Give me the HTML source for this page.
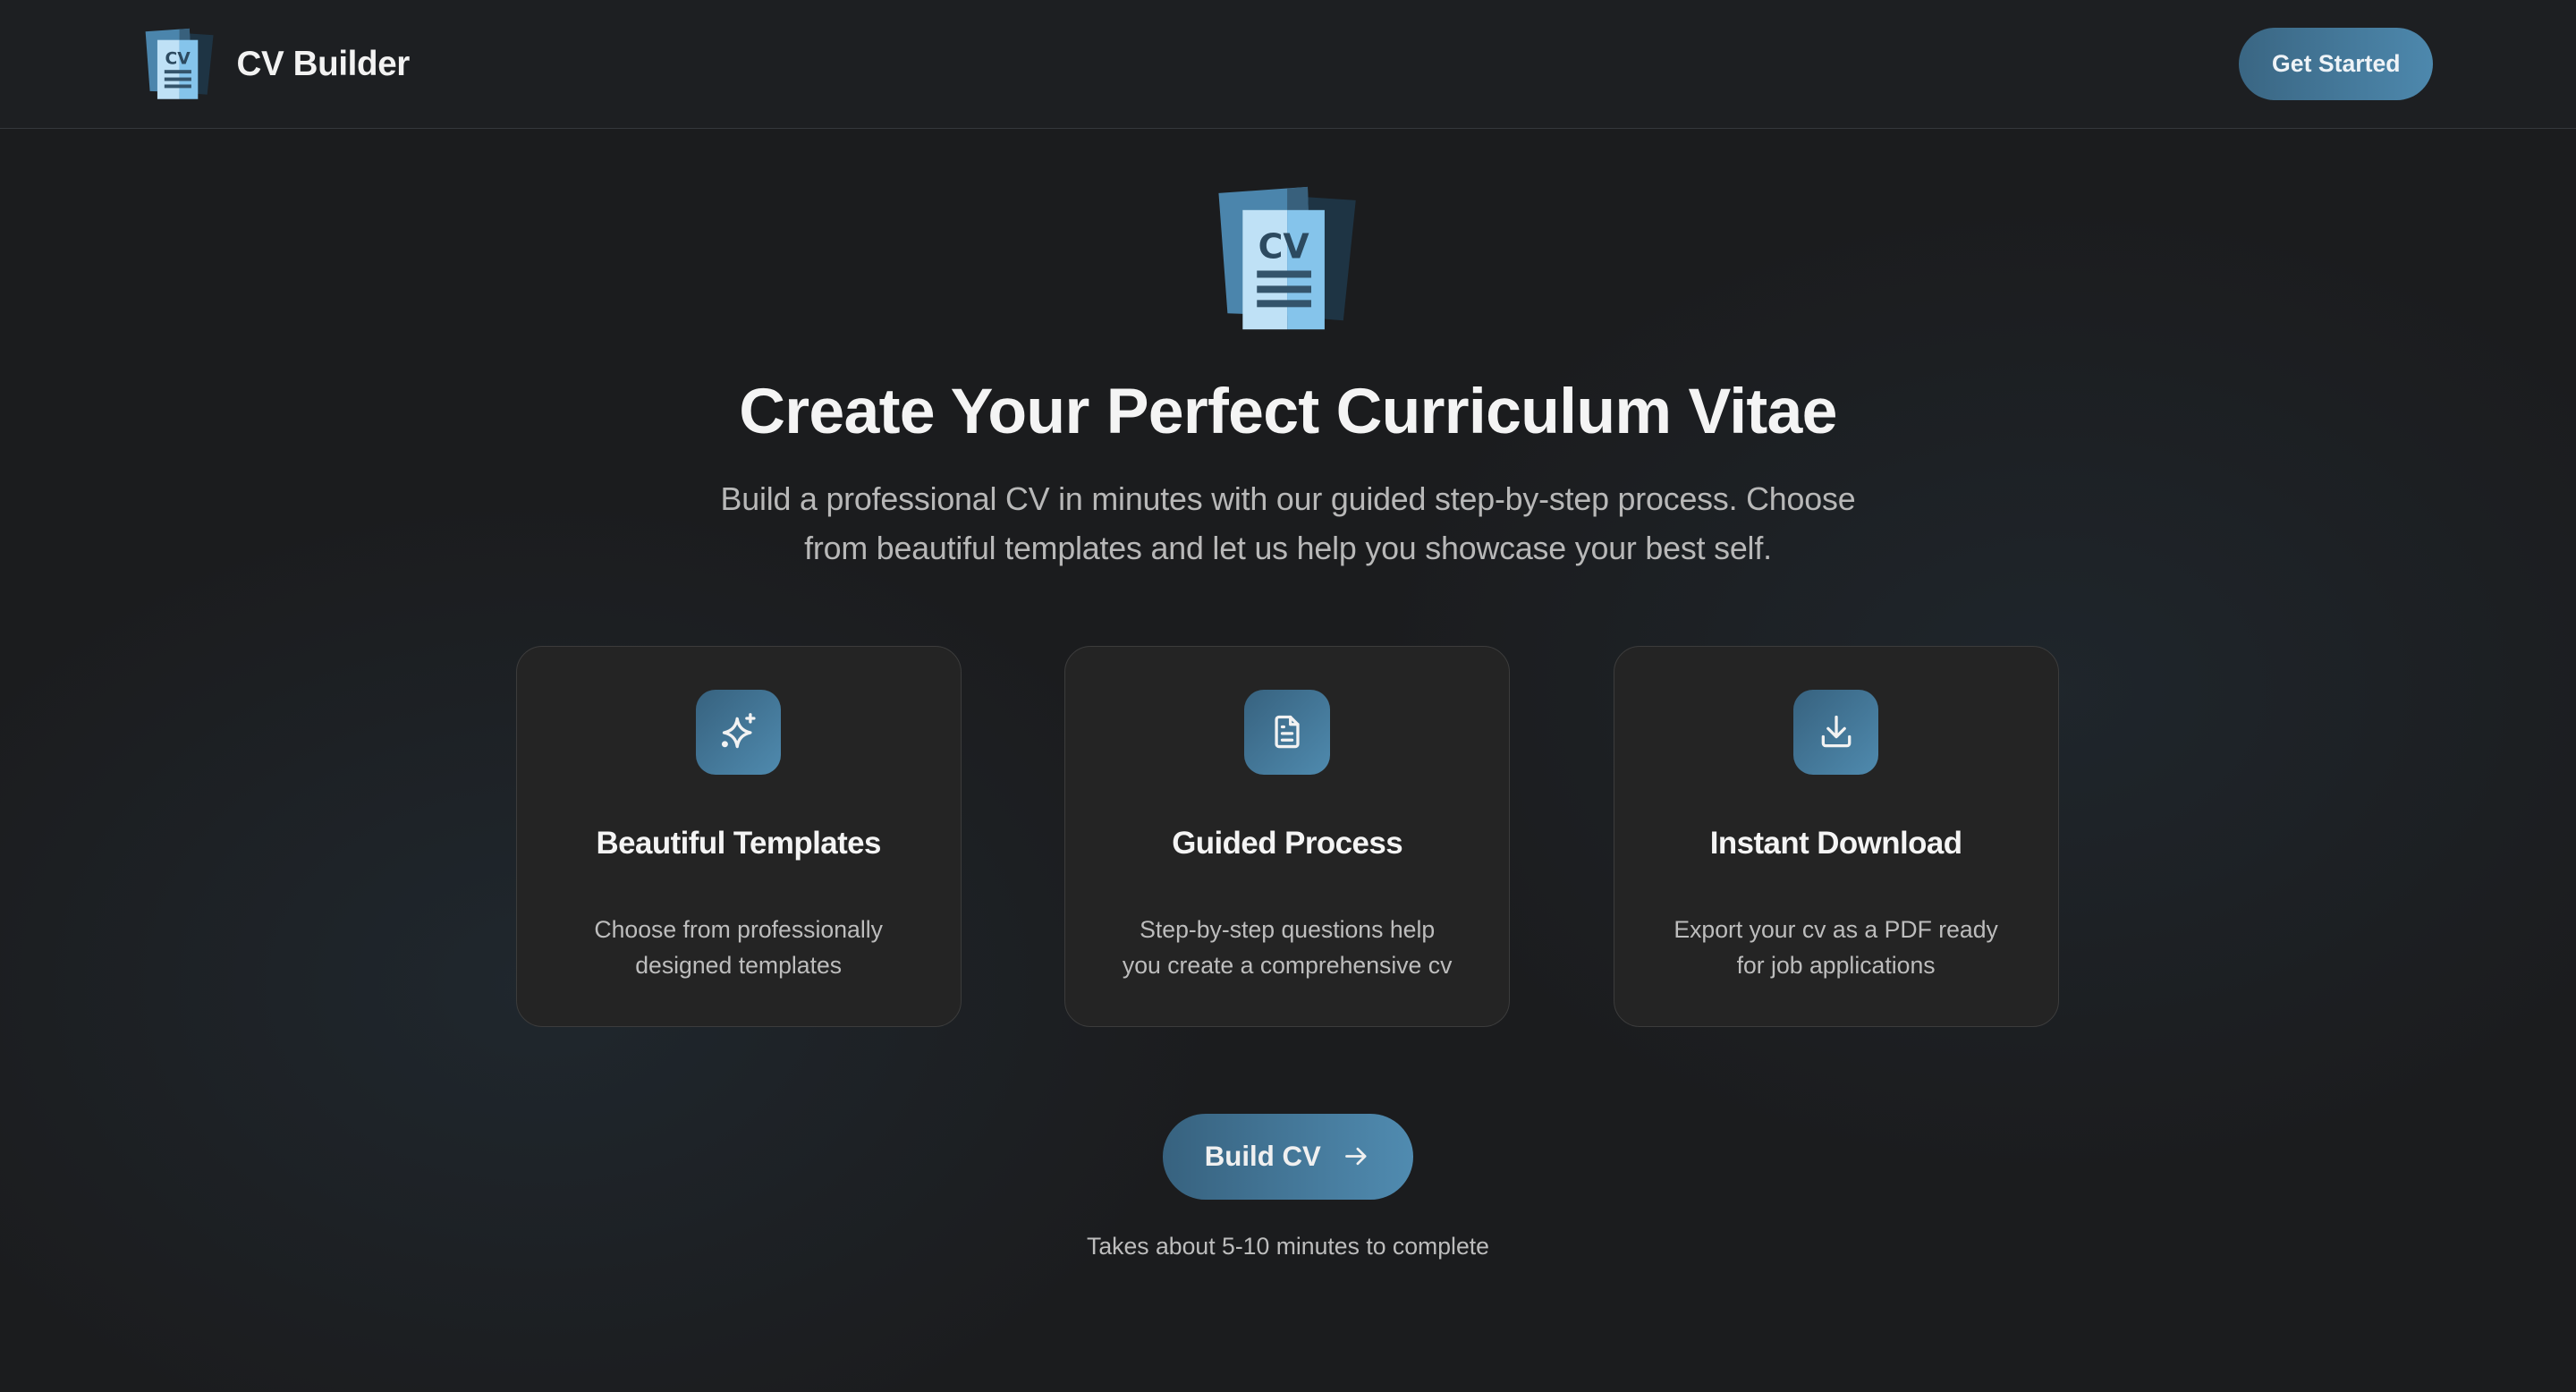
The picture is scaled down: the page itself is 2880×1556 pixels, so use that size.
<!DOCTYPE html>
<html><head><meta charset="utf-8"><style>
html,body{margin:0;padding:0;}
body{width:2880px;height:1556px;overflow:hidden;background:#1b1c1e;font-family:"Liberation Sans",sans-serif;}
#r{zoom:1.83673;width:1568px;height:847px;position:relative;overflow:hidden;
background:radial-gradient(ellipse 420px 300px at 330px 600px,rgba(40,60,75,.35),transparent),radial-gradient(ellipse 420px 300px at 1250px 420px,rgba(40,60,75,.3),transparent),#1b1c1e;}
.a{position:absolute;}
header{position:absolute;left:0;top:0;width:1568px;height:78px;background:#1d1f22;border-bottom:1px solid #35383c;}
.brand{left:144px;top:27px;font-size:21px;font-weight:700;color:#f2f2f2;letter-spacing:-.2px;}
.gs{left:1363px;top:17px;width:118px;height:44px;border-radius:22px;background:linear-gradient(90deg,#3a6683,#4d88ad);color:#eef3f7;font-size:14.5px;font-weight:700;text-align:center;line-height:44px;}
h1{position:absolute;left:0;width:1568px;top:228px;margin:0;text-align:center;font-size:39px;letter-spacing:-.4px;font-weight:700;color:#f4f4f4;}
.p{left:424px;width:720px;top:289px;text-align:center;font-size:19.5px;line-height:30px;color:#b8b8b8;letter-spacing:-.1px;}
.card{position:absolute;top:393px;width:270px;height:231px;border:1px solid #3c3c3c;border-radius:16px;background:#242424;text-align:center;}
.ic{position:absolute;left:109px;top:26px;width:52px;height:52px;border-radius:12px;background:linear-gradient(135deg,#37627f,#4f8aae);}
.ic svg{position:absolute;left:14px;top:14px;}
.t{position:absolute;left:0;right:0;top:109px;font-size:19px;letter-spacing:-.3px;font-weight:700;color:#f4f4f4;}
.d{position:absolute;left:34px;right:34px;top:161px;font-size:14.5px;line-height:22px;color:#bdbdbd;}
.btn{left:708px;top:678px;width:152px;height:52px;border-radius:26px;background:linear-gradient(90deg,#37627f,#508bb0);color:#f0f0f0;font-size:17px;font-weight:700;line-height:52px;text-align:center;}
.fn{left:0;width:1568px;top:750px;text-align:center;font-size:14.5px;color:#bdbdbd;}
</style></head><body><div id="r">
<header>
<svg class="a" style="left:82px;top:12px" width="54" height="51" viewBox="0 0 200 190">
<polygon points="100,30 177,35 163,170 100,165" fill="#1e3444"/>
<polygon points="23,27 123,20 127,165 33,162" fill="#4b85ac"/>
<polygon points="100,22 123,20 127,165 100,164" fill="#38607c"/>
<rect x="50" y="46" width="50" height="134" fill="#bfe1f6"/><rect x="100" y="46" width="42" height="134" fill="#85c4eb"/>
<text x="96" y="100" text-anchor="middle" font-family="DejaVu Sans" font-weight="700" font-size="38" fill="#2c4a60">CV</text>
<rect x="66" y="114" width="61" height="8" fill="#34546b"/><rect x="66" y="131" width="61" height="8" fill="#34546b"/><rect x="66" y="147" width="61" height="8" fill="#34546b"/>
</svg>
<div class="a brand">CV Builder</div>
<div class="a gs">Get Started</div>
</header>
<svg class="a" style="left:729px;top:103px" width="109" height="103" viewBox="0 0 200 190">
<polygon points="100,30 177,35 163,170 100,165" fill="#1e3444"/>
<polygon points="23,27 123,20 127,165 33,162" fill="#4b85ac"/>
<polygon points="100,22 123,20 127,165 100,164" fill="#38607c"/>
<rect x="50" y="46" width="50" height="134" fill="#bfe1f6"/><rect x="100" y="46" width="42" height="134" fill="#85c4eb"/>
<text x="96" y="100" text-anchor="middle" font-family="DejaVu Sans" font-weight="700" font-size="38" fill="#2c4a60">CV</text>
<rect x="66" y="114" width="61" height="8" fill="#34546b"/><rect x="66" y="131" width="61" height="8" fill="#34546b"/><rect x="66" y="147" width="61" height="8" fill="#34546b"/>
</svg>
<h1>Create Your Perfect Curriculum Vitae</h1>
<div class="a p">Build a professional CV in minutes with our guided step-by-step process. Choose<br>from beautiful templates and let us help you showcase your best self.</div>
<div class="card" style="left:314px"><div class="ic"><svg width="24" height="24" viewBox="0 0 24 24" fill="none" stroke="#f2f2f2" stroke-width="1.8" stroke-linecap="round" stroke-linejoin="round"><path d="M11 4 Q12 11 19 12.5 Q12 14 11 21 Q10 14 3 12.5 Q10 11 11 4Z"/><path d="M19 1.5v4.5M16.8 3.8h4.4"/><circle cx="3.5" cy="19.5" r="1" fill="#f2f2f2"/></svg></div><div class="t">Beautiful Templates</div><div class="d">Choose from professionally designed templates</div></div>
<div class="card" style="left:648px"><div class="ic"><svg width="24" height="24" viewBox="0 0 24 24" fill="none" stroke="#f2f2f2" stroke-width="1.8" stroke-linecap="round" stroke-linejoin="round"><path d="M14 3H7a1.5 1.5 0 0 0-1.5 1.5v15A1.5 1.5 0 0 0 7 21h10a1.5 1.5 0 0 0 1.5-1.5V7.5z"/><path d="M14 3v4.5h4.5"/><path d="M9 9h1M9 13h6M9 17h6"/></svg></div><div class="t">Guided Process</div><div class="d">Step-by-step questions help you create a comprehensive cv</div></div>
<div class="card" style="left:982px"><div class="ic"><svg width="24" height="24" viewBox="0 0 24 24" fill="none" stroke="#f2f2f2" stroke-width="1.8" stroke-linecap="round" stroke-linejoin="round"><path d="M12 3v12M7 10l5 5 5-5"/><path d="M4 15v4a1.5 1.5 0 0 0 1.5 1.5h13A1.5 1.5 0 0 0 20 19v-4"/></svg></div><div class="t">Instant Download</div><div class="d">Export your cv as a PDF ready for job applications</div></div>
<div class="a btn">Build CV <svg style="vertical-align:-3px;margin-left:8px" width="18" height="18" viewBox="0 0 24 24" fill="none" stroke="#f0f0f0" stroke-width="2" stroke-linecap="round" stroke-linejoin="round"><path d="M4 12h15M13 6l6 6-6 6"/></svg></div>
<div class="a fn">Takes about 5-10 minutes to complete</div>
</div></body></html>
